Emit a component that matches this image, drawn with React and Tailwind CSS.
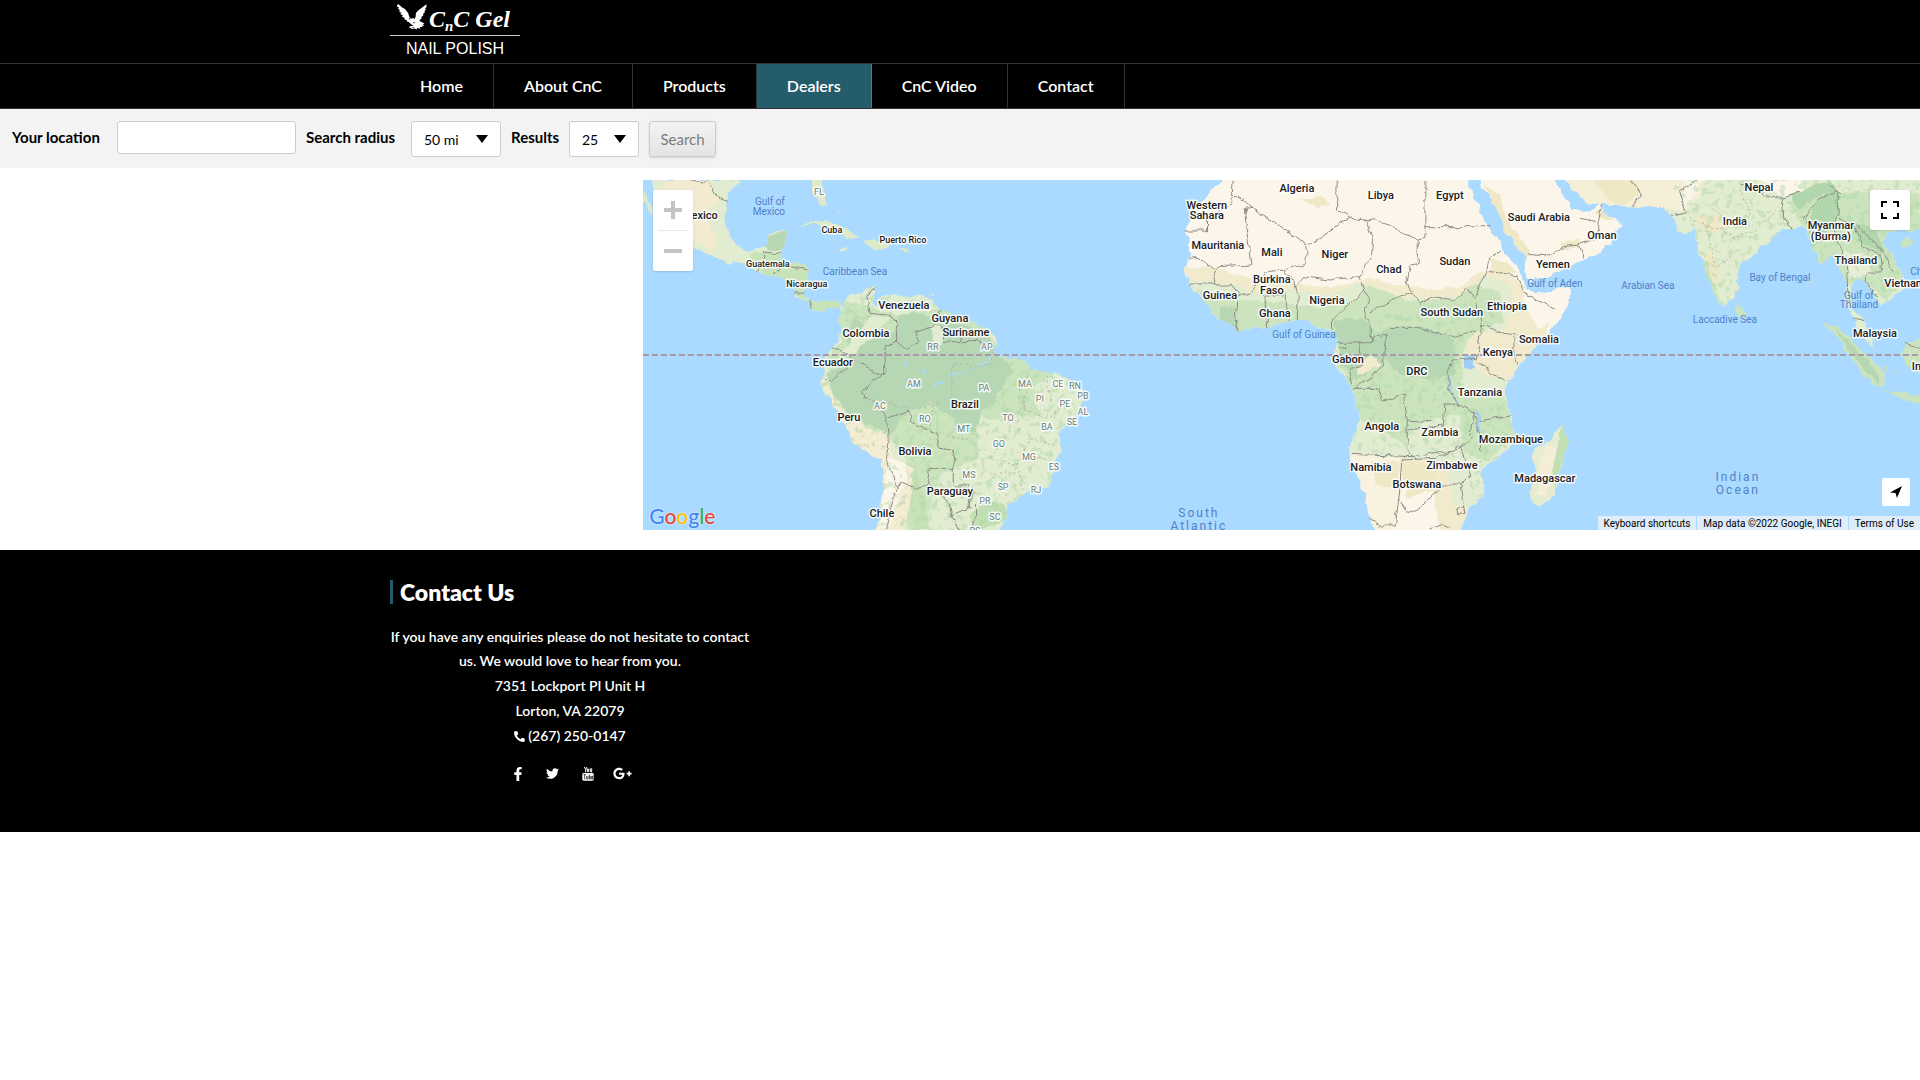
import { FaFacebookF, FaTwitter, FaPhone } from "react-icons/fa";
import { FaGooglePlusG } from "react-icons/fa6";

const navItems = ["Home", "About CnC", "Products", "Dealers", "CnC Video", "Contact"];

// Each label: text, centre x, centre y
const countries = [
  ["Mexico", 57, 35], ["Venezuela", 261, 125], ["Guyana", 307, 138], ["Suriname", 323, 152],
  ["Colombia", 223, 153], ["Ecuador", 190, 182], ["Brazil", 322, 224], ["Peru", 206, 237],
  ["Bolivia", 272, 271], ["Paraguay", 307, 311], ["Chile", 239, 333], ["Algeria", 654, 8],
  ["Libya", 738, 15], ["Western", 564, 25], ["Sahara", 564, 35], ["Mauritania", 575, 65],
  ["Mali", 629, 72], ["Niger", 692, 74], ["Chad", 746, 89], ["Burkina", 629, 99], ["Faso", 629, 110],
  ["Guinea", 577, 115], ["Ghana", 632, 133], ["Nigeria", 684, 120], ["Gabon", 705, 179],
  ["DRC", 774, 191], ["Angola", 739, 246], ["Namibia", 728, 287], ["Botswana", 774, 304],
  ["Egypt", 807, 15], ["Saudi Arabia", 896, 37], ["Oman", 959, 55], ["Sudan", 812, 81],
  ["Yemen", 910, 84], ["Ethiopia", 864, 126], ["South Sudan", 809, 132], ["Somalia", 896, 159],
  ["Kenya", 855, 172], ["Tanzania", 837, 212], ["Zambia", 797, 252], ["Mozambique", 868, 259],
  ["Zimbabwe", 809, 285], ["Madagascar", 902, 298], ["Nepal", 1116, 7], ["India", 1092, 41],
  ["Myanmar", 1188, 45], ["(Burma)", 1188, 56], ["Thailand", 1213, 80], ["Vietnam", 1262, 103],
  ["Malaysia", 1232, 153], ["Indonesia", 1293, 186],
];
const islands = [["Cuba", 189, 49], ["Puerto Rico", 260, 59], ["Guatemala", 125, 83], ["Nicaragua", 164, 103]];
const states = [
  ["FL", 176, 11], ["RR", 290, 166], ["AM", 271, 203], ["AC", 237, 225], ["RO", 282, 238], ["MT", 321, 248],
  ["MS", 326, 294], ["AP", 344, 166], ["PA", 341, 207], ["MA", 382, 203], ["CE", 415, 203], ["RN", 432, 205],
  ["PI", 397, 218], ["PB", 440, 215], ["PE", 422, 223], ["AL", 440, 231], ["SE", 429, 241], ["TO", 365, 237],
  ["BA", 404, 246], ["GO", 356, 263], ["MG", 386, 276], ["ES", 411, 286], ["SP", 360, 306], ["RJ", 393, 309],
  ["PR", 342, 320], ["SC", 352, 336], ["RS", 332, 350],
];
const seas = [
  ["Gulf of", 127, 21], ["Mexico", 126, 31], ["Caribbean Sea", 212, 91], ["Gulf of Guinea", 661, 154],
  ["Gulf of Aden", 912, 103], ["Arabian Sea", 1005, 105], ["Bay of Bengal", 1137, 97],
  ["Gulf of", 1216, 115], ["Thailand", 1216, 124], ["Laccadive Sea", 1082, 139], ["China", 1280, 91],
];
const oceans = [["South", 556, 333], ["Atlantic", 556, 346], ["Indian", 1095, 297], ["Ocean", 1095, 310]];

function Labels({ items, className, halo = true }) {
  return (
    <g className={className} textAnchor="middle" stroke={halo ? "#ffffff" : "none"} strokeWidth="3" strokeLinejoin="round" strokeOpacity="0.85" paintOrder="stroke">
      {items.map(([text, x, y]) => (
        <text key={text + x + y} x={x} y={y + 4}>{text}</text>
      ))}
    </g>
  );
}

const P = {
  mexico: "M35 15L305 15L275 35L262 75L257 110L258 150L272 195L300 215L325 228L370 218L385 200L383 180L395 170L442 165L438 190L430 225L418 240L420 262L470 265L505 280L500 310L498 340L488 352L510 375L545 380L570 377L595 380L608 400L600 415L590 395L555 400L555 413L515 400L500 375L465 362L460 345L430 310L400 305L350 290L320 262L285 262L270 267L215 240L165 220L150 190L110 160L80 100L45 60Z",
  south: "M608 400L600 430L605 470L590 500L580 520L560 535L548 560L550 590L542 615L545 640L570 670L600 720L625 770L632 795L680 830L725 860L730 900L726 950L720 1000L708 1080L1065 1080L1095 1045L1097 1020L1105 990L1150 960L1180 945L1225 930L1245 880L1258 830L1262 770L1300 730L1325 695L1330 665L1325 640L1290 615L1260 595L1230 590L1170 585L1165 570L1150 553L1110 550L1080 545L1060 530L1073 505L1060 475L1030 455L990 440L955 440L915 410L880 385L885 370L850 362L780 362L735 355L718 370L712 395L698 380L705 355L708 333L690 330L665 355L625 365Z",
  africa: "M170 0L165 15L130 40L105 70L80 100L62 130L48 165L57 200L58 240L42 285L55 310L60 330L100 365L112 395L150 430L208 465L245 455L290 458L330 445L370 433L415 430L430 455L485 462L500 490L497 520L485 555L500 580L540 625L558 680L572 725L550 780L537 840L560 900L582 950L595 1010L625 1080L865 1080L895 1010L900 990L940 970L945 930L928 890L960 860L1010 830L1030 800L1028 730L1010 690L1003 640L1030 590L1070 545L1110 500L1150 460L1185 400L1208 350L1205 335L1160 345L1110 355L1085 350L1065 330L1055 300L1040 270L1005 235L990 195L965 180L940 125L910 60L900 35L895 0Z",
  arabia: "M180 0L180 25L210 65L240 110L262 180L300 225L318 250L318 290L330 318L380 305L440 275L490 255L530 240L555 215L575 205L580 185L604 150L590 130L550 120L545 85L510 110L475 105L455 105L440 75L410 30L400 0Z",
  asia: "M425 0L440 20L470 55L500 85L560 88L640 98L730 95L745 115L770 150L770 165L795 178L822 155L830 210L850 270L880 350L910 400L935 370L955 330L955 270L990 245L1060 190L1080 165L1135 155L1150 160L1175 200L1200 265L1240 240L1265 290L1285 330L1270 370L1300 430L1325 490L1362 518L1355 470L1325 430L1300 405L1290 370L1295 330L1310 310L1340 325L1360 355L1380 390L1410 375L1450 340L1448 300L1420 240L1390 210L1400 175L1450 165L1520 160L1520 0Z",
  madagascar: "M425 752L447 800L430 850L405 960L360 992L335 975L330 930L350 890L336 850L345 820L390 795Z",
};

function WorldMap() {
  return (
    <svg viewBox="0 0 1277 350" preserveAspectRatio="xMidYMid slice" className="block h-full w-full" role="img" aria-label="Map of dealers">
      <defs>
        <filter id="coast" x="0" y="0" width="100%" height="100%" colorInterpolationFilters="sRGB">
          <feTurbulence type="fractalNoise" baseFrequency="0.09" numOctaves="3" seed="4" result="n" />
          <feDisplacementMap in="SourceGraphic" in2="n" scale="7" xChannelSelector="R" yChannelSelector="G" />
        </filter>
        <filter id="patches" x="0" y="0" width="100%" height="100%" colorInterpolationFilters="sRGB">
          <feTurbulence type="fractalNoise" baseFrequency="0.05" numOctaves="4" seed="9" result="n" />
          <feColorMatrix in="n" type="matrix" values="0 0 0 0 0.68 0 0 0 0 0.84 0 0 0 0 0.65 9 0 0 0 -5" result="c" />
          <feComposite in="c" in2="SourceGraphic" operator="in" />
        </filter>
        <clipPath id="cSouth"><path d={P.south} /></clipPath>
        <clipPath id="cAfrica"><path d={P.africa} /></clipPath>
        <clipPath id="cAsia"><path d={P.asia} /></clipPath>
        <clipPath id="cMexico"><path d={P.mexico} /></clipPath>
      </defs>
      <rect width="1277" height="350" fill="#aadaff" />
      <g filter="url(#coast)">
        <rect x="-10" y="-10" width="1297" height="370" fill="#aadaff" />
        <g transform="scale(0.33333) translate(-9 -15)">
          {/* North and Central America */}
          <path d={P.mexico} fill="#e1ecd0" />
          <g clipPath="url(#cMexico)">
            <path d="M80 0L200 15L235 70L200 130L235 190L215 225L100 160L60 60Z" fill="#f3ebcf" />
            <path d="M383 180L445 165L430 225L390 230L375 215Z" fill="#b7d8b2" />
            <path d="M330 230L420 235L505 280L500 380L400 310L340 280Z" fill="#c9e3b9" />
            <path d="M500 370L600 380L600 410L520 410Z" fill="#c9e3b9" />
          </g>
          <path d="M9 50L25 75L40 125L30 118L9 80Z M513 0L520 55L545 95L558 88L553 45L545 0Z M480 155L510 137L560 135L610 155L658 188L620 192L610 178L560 158L520 145Z M675 197L700 193L755 212L740 220L705 225L680 210Z M592 222L620 220L618 230L598 230Z M778 219L805 220L804 228L780 227Z M590 98L600 115L594 112Z M846 222L852 224L848 228Z M875 356L885 358L878 363Z" fill="#dfeac8" />

          {/* South America */}
          <path d={P.south} fill="#e1ecd0" />
          <g clipPath="url(#cSouth)">
            <path d="M600 370L700 400L780 420L900 400L1000 430L1080 520L1180 560L1240 590L1180 640L1200 720L1130 720L1080 780L1020 860L900 900L850 1065L800 1065L800 850L740 780L680 760L570 640L560 550L600 500Z" fill="#cbe4bd" />
            <path d="M540 600L580 660L610 720L700 770L745 780L760 850L820 880L820 940L790 1070L690 1070L720 860L620 800Z" fill="#f4ecd3" />
            <path d="M745 850L790 860L810 910L780 960L745 1065L715 1065L730 940Z" fill="#fbf6e9" />
            <path d="M820 870L850 950L870 1065L820 1065L810 940Z" fill="#c5e1b5" />
            <path d="M1010 720L1120 740L1200 790L1230 880L1120 940L1020 1000L940 990L940 880L1020 850Z" fill="#e2ecd0" />
            <path d="M1040 985L1095 980L1100 1040L1000 1065L985 1020Z" fill="#c2dfb3" />
            <path d={P.south} fill="#fff" filter="url(#patches)" opacity="0.45" />
            <path d="M780 420L860 415L880 450L960 445L1050 480L1070 540L1100 560L1120 590L1085 630L1060 690L1020 710L1010 770L960 760L930 720L870 680L800 710L750 780L690 750L640 730L580 660L560 600L640 550L620 480L640 430L690 460L760 470Z" fill="#b7d7b4" />
            <path d="M700 420L745 430L690 490L650 530L590 560L640 490Z M870 450L905 460L910 510L885 500Z" fill="#e2ecd0" />
            <path d="M800 560L803 575M845 575L860 600M880 640L905 620M930 600L985 590M1000 580L1040 560L1060 535" fill="none" stroke="#aadaff" strokeWidth="4" />
          </g>

          {/* Africa */}
          <g transform="translate(1590 0)">
            <path d={P.africa} fill="#fbf6e9" />
            <g clipPath="url(#cAfrica)">
              <path d="M0 280L120 275L230 305L330 325L400 325L490 335L600 310L700 330L800 345L880 330L930 290L1000 280L1060 330L1120 370L1150 400L1120 520L1060 600L1050 840L950 1070L810 1070L790 950L700 930L560 850L480 450L0 450Z" fill="#f2eacd" />
              <path d="M0 325L140 320L260 350L380 345L480 365L570 320L640 370L800 370L890 360L950 300L1020 330L1030 400L1000 460L900 480L880 560L950 600L1040 620L1060 810L930 900L960 1000L850 990L830 870L700 850L540 840L480 460L0 480Z" fill="#e1ecd0" />
              <path d="M1060 340L1210 330L1200 420L1110 460L1070 400Z" fill="#fbf6e9" />
              <path d="M40 330L140 370L300 380L440 395L540 390L600 330L720 380L850 370L910 330L990 350L1000 440L910 470L870 540L880 650L1000 660L1040 780L950 860L880 830L870 720L760 740L700 800L560 730L480 460L200 500Z" fill="#cbe4bd" />
              <path d="M480 470L600 430L880 370L1000 380L980 450L880 500L890 700L1020 680L1030 850L930 990L860 850L560 830Z" fill="#fff" filter="url(#patches)" opacity="0.45" />
              <path d="M490 440L580 430L610 480L650 460L760 455L850 490L855 600L780 610L690 600L650 550L590 590L560 620L510 560Z" fill="#b7d7b4" />
              <path d="M150 400L200 400L210 465L150 430Z M615 480L655 470L640 560L580 590Z" fill="#b7d7b4" />
              <path d="M570 560L610 540L630 570L560 600Z M920 470L1040 480L1030 560L960 560Z" fill="#f2eacd" />
              <path d="M530 840L690 850L700 930L670 1070L600 1070Z" fill="#f8f2df" />
              <path d="M600 860L690 860L680 940L620 930Z M700 860L800 870L790 940L710 970Z M395 75L470 65L480 90L440 95Z M960 250L1010 260L1040 290L970 290Z" fill="#f0e7c5" />
            </g>
            <path d="M880 545L915 540L915 580L885 580Z M838 600L846 650L862 685L856 685L840 650L834 610Z M918 705L930 720L930 775L922 770Z" fill="#9fcdf8" />
          </g>

          {/* Arabia, Asia and Madagascar */}
          <g transform="translate(2340 0)">
            <path d={P.arabia} fill="#fbf6e9" />
            <path d="M190 25L235 60L260 130L300 190L330 235L318 250L262 180L225 90Z M520 115L545 105L590 140L560 135Z M420 205L480 195L475 215L430 225Z" fill="#f0e7c5" />
            <path d={P.asia} fill="#e1ecd0" />
            <g clipPath="url(#cAsia)">
              <path d="M420 0L860 0L840 60L800 110L740 100L500 90Z" fill="#f5efd8" />
              <path d="M520 10L640 10L660 60L600 95L550 60Z M830 130L900 120L930 160L860 180Z M845 230L890 240L900 340L870 300Z" fill="#f0e7c5" />
              <path d="M1000 0L1160 0L1150 50L1090 70Z M800 10L850 10L820 60L780 100Z" fill="#fbf6e9" />
              <path d="M840 250L865 260L885 350L915 395L890 395Z M1100 80L1300 50L1500 60L1500 170L1400 170L1450 300L1400 380L1340 320L1260 330L1180 240L1140 140Z" fill="#cbe4bd" />
              <path d="M1190 80L1250 30L1260 120L1180 220L1160 150Z M1110 60L1230 15L1250 40L1130 100Z M1300 140L1370 160L1390 230L1310 200Z" fill="#b2d6ae" />
              <path d="M1270 230L1340 240L1350 300L1290 310Z" fill="#e8eed6" />
              <path d="M750 0L1520 0L1520 400L1150 300L860 400Z" fill="#fff" filter="url(#patches)" opacity="0.45" />
            </g>
            <path d={P.madagascar} fill="#e6ecd0" />
            <path d="M425 752L447 800L430 850L405 940L400 880L415 800Z" fill="#c2dfb3" />
            <path d="M380 810L410 820L380 960L350 960L360 860Z" fill="#f5eed6" />
          </g>
          <g transform="translate(3090 0)" fill="#cbe4bd">
            <path d="M205 375L230 410L228 430L205 430L197 405Z M463 447L500 455L560 510L610 560L645 600L642 640L600 620L550 560L520 510Z M638 645L700 655L760 660L760 684L700 675Z M760 475L740 490L710 505L695 540L710 570L760 596Z M690 205L715 185L728 200L705 225Z M418 310L424 315L421 330Z M640 570L655 575L650 590Z M670 585L682 588L676 594Z" />
            <path d="M490 460L560 520L630 600L630 630L580 580Z" fill="#b7d7b4" />
          </g>

          {/* National borders */}
          <g fill="none" stroke="#8c8c86" strokeWidth="3">
            <path d="M150 15L185 25L200 17L235 70L268 80M370 230L405 235L420 235M370 230L375 245L350 290M400 300L430 270L500 285M460 350L498 352M510 375L512 400" />
            <path d="M708 335L680 360L690 415L740 420L770 435L770 500L735 515L735 530L738 600L725 600L640 555L580 515M555 615L575 622L640 555M738 600L700 615L668 650L675 670L720 690L722 710L745 730L810 708L812 740L890 775L898 820L935 825L945 850L938 880L870 880L860 925L825 940L790 925L770 935L740 850L745 790L740 730M770 500L800 525L840 500L825 470L850 465L880 455L905 400M905 455L912 500L950 500L1060 500M955 455L960 500M940 880L940 930L980 930L990 1000L930 1025M780 925L760 970L740 1065M860 925L930 985L940 1025L960 1065M990 1065L1010 1020L1010 990M985 1000L1000 935" />
            <g transform="translate(1590 0)">
              <path d="M47 165L113 165L113 135L187 80L187 55L390 193L408 207L435 200L540 127L500 100L502 15M187 55L190 15M540 127L575 138L610 128L745 195L745 265L722 270L712 320L725 350M765 15L765 190L745 195M765 155L965 155M223 100L250 97M223 100L243 270L145 275L130 285L100 250L55 252M60 330L140 330L130 290M408 207L408 268L340 285L290 290L245 350L205 362M380 335L400 305L480 315L565 305L605 245L608 185L592 135M565 305L580 345L485 440L485 460M382 433L385 365L375 330L340 285M290 458L285 360L340 360M355 435L345 350M205 362L200 420L208 465M140 330L180 330L205 362M580 345L600 370L583 405L612 500L500 502M598 412L725 350L750 385L790 365L850 375L890 340L915 370L950 290L960 245L995 228M530 502L530 522L500 522M562 502L580 575L535 580L545 625M612 500L615 485L653 480L635 570L605 610L550 640L620 640L635 680L700 660L712 735L785 740M653 460L740 460L850 485L920 465M935 450L1000 475L1045 480M920 380L935 450L920 550L850 555L835 590L835 640L865 690L825 690L820 750L715 765M865 690L910 710L900 780M712 735L712 825L730 845L540 838M730 845L870 825L910 780M920 555L1005 620M930 740L1025 722M910 710L938 830M1035 485L1035 545L1045 570M960 290L1040 300L1060 350L1155 405M695 860L690 940L677 1050L625 1050L600 1025M685 970L710 1015L760 990L820 930L870 930L885 1015M695 855L800 850L870 815L900 900L870 930M860 1005L880 995L885 1015L865 1020ZM785 1065L820 1050L840 1065" />
            </g>
            <g transform="translate(2340 0)">
              <path d="M318 235L390 240L430 215L475 210L530 190L535 140L480 130M475 210L490 250M535 140L545 90M640 95L665 60L635 15M750 120L800 110L775 50L830 15M960 20L1030 65L1090 70L1140 50M1090 70L1095 130L1110 160M1170 160L1150 130L1200 70L1250 50L1255 120L1240 170L1280 270L1285 380M1230 30L1260 60M1260 130L1310 160L1330 220L1380 235L1385 290L1340 295L1335 320L1375 370M1310 150L1390 230L1420 290M1295 428L1330 440M1455 505L1500 520" />
            </g>
          </g>
          <g fill="none" stroke="#a4aba0" strokeWidth="2" strokeDasharray="8 6">
            <path d="M1060 500L1060 560L1000 580L940 560L930 690L1010 700M880 690L870 760L980 800M1095 680L1110 770L1050 850L1130 870L1165 790L1250 810M1135 770L1140 600M1170 580L1150 700L1220 730L1300 680M1050 900L1140 890L1150 950M1220 600L1230 680M1140 860L1220 850M670 670L820 700L900 680" />
            <path d="M3210 90L3260 140L3340 120M3200 150L3230 280L3280 240M3250 200L3350 160L3420 90M3150 130L3280 180M3300 40L3330 120" />
          </g>
        </g>
      </g>
      <path d="M0 175H1277" stroke="#a89aa6" strokeWidth="2" strokeDasharray="6 3" />
      <Labels items={countries} className="fill-[#202020] text-[11px] font-medium" />
      <Labels items={islands} className="fill-[#202020] text-[9px] font-medium" />
      <Labels items={states} className="fill-[#637f78] text-[9px]" />
      <Labels items={seas} className="fill-[#5080c8] text-[10px]" halo={false} />
      <Labels items={oceans} className="fill-[#5080c8] text-[12px] tracking-[2px]" halo={false} />
    </svg>
  );
}

function Logo() {
  return (
    <a href="#home" className="flex w-[130px] flex-col text-white">
      <span className="flex h-[35px] items-start pl-[7px]">
        <svg viewBox="0 0 92 78" className="mt-1 h-[26px] w-[30px] shrink-0" fill="currentColor" aria-hidden="true">
          <path d="M0 2L5 0L15 9L25 15L34 27L38 39L43 44L50 42L53 46L57 39L58 27L66 18L76 11L86 3L91 1L90 9L86 13L89 15L84 21L86 24L80 30L81 34L75 39L75 44L69 48L70 52L77 55L84 60L79 62L84 66L75 66L80 70L70 70L72 75L62 73L60 77L54 74L45 76L41 72L36 71L40 67L51 66L43 61L37 55L29 52L31 49L22 46L24 42L15 38L18 34L10 30L13 26L6 21L9 18L3 13L6 10L0 7Z" />
          <path d="M35 45L40 42L41 47Z M50 54L56 57L51 59Z M45 71L52 69L50 73Z" fill="#000" />
        </svg>
        <span className="whitespace-nowrap pl-[2px] pt-1 font-['Liberation_Serif',serif] text-[24px] font-bold italic leading-[30px]">
          C<sub className="text-[15px]">n</sub>C Gel
        </span>
      </span>
      <span className="border-t border-[#ccc] pt-[3px] text-center font-['Liberation_Sans',sans-serif] text-[16px] leading-[20px]">NAIL POLISH</span>
    </a>
  );
}

function SelectBox({ id, options, className }) {
  return (
    <span className={"relative block " + className}>
      <select id={id} className="h-9 w-full appearance-none rounded-[3px] border border-[#ccc] bg-white pl-3 text-[14px] text-black">
        {options.map((o) => <option key={o}>{o}</option>)}
      </select>
      <svg viewBox="0 0 12 8" className="pointer-events-none absolute right-[13px] top-[14px] h-2 w-3" aria-hidden="true"><path d="M0 0H12L6 8Z" /></svg>
    </span>
  );
}

function YouTubeMark() {
  return (
    <svg viewBox="0 0 36 42" className="h-[14px] w-3" fill="none" stroke="currentColor" strokeWidth="3" aria-hidden="true">
      <path d="M7 0L11 8V16M15 0L11 8M16 6H20V14H16ZM25 4V14H29V4M29 14V16" />
      <rect x="1" y="18" width="34" height="23" rx="4" fill="currentColor" stroke="none" />
      <path d="M4 23H12M8 23V37M14 27V36H18V27M22 22V36H25V28H22M33 33V36H29V28H33V31H29" stroke="#000" strokeWidth="2" />
    </svg>
  );
}

export default function App() {
  return (
    <div className="min-h-screen bg-white font-[Lato,sans-serif] text-black">
      <header className="bg-black text-white">
        <div className="mx-auto h-[63px] max-w-[1140px]"><Logo /></div>
        <nav className="border-y border-[#333]" aria-label="Main">
          <ul className="mx-auto flex max-w-[1140px]">
            {navItems.map((item) => (
              <li key={item}>
                <a
                  href="#nav"
                  className={"block border-r px-[30px] text-[16px] font-semibold leading-[44px] " + (item === "Dealers" ? "border-[#4b7d8b] bg-[#255c6b]" : "border-[#333]")}
                >
                  {item}
                </a>
              </li>
            ))}
          </ul>
        </nav>
      </header>

      <main>
        <form className="flex h-[59px] items-start bg-[#f3f3f3] px-3 pt-3 text-[14px]" onSubmit={(e) => e.preventDefault()}>
          <label htmlFor="location" className="w-[105px] text-[15px] font-bold leading-8">Your location</label>
          <input id="location" type="text" className="h-[33px] w-[179px] rounded-[3px] border border-[#ccc] bg-white px-3" />
          <label htmlFor="radius" className="ml-[10px] w-[105px] text-[15px] font-bold leading-8">Search radius</label>
          <SelectBox id="radius" options={["50 mi", "10 mi", "25 mi", "100 mi"]} className="w-[90px]" />
          <label htmlFor="results" className="ml-[10px] w-[58px] text-[15px] font-bold leading-8">Results</label>
          <SelectBox id="results" options={["25", "50", "75", "100"]} className="w-[70px]" />
          <button type="submit" className="ml-[10px] h-9 w-[67px] rounded-[3px] border border-[#ccc] bg-gradient-to-b from-[#f3f3f3] to-[#e4e4e4] text-[15px] text-[#7c7c7c] shadow-sm">Search</button>
        </form>

        <section className="flex justify-end pb-5 pt-3" aria-label="Dealer map">
          <div className="relative h-[350px] w-[66.5%] overflow-hidden font-[Roboto,sans-serif]">
            <WorldMap />
            <div className="absolute left-[10px] top-[10px] flex w-10 flex-col items-center rounded-[2px] bg-white shadow">
              <button type="button" aria-label="Zoom in" className="flex h-10 w-10 items-center justify-center">
                <svg viewBox="0 0 18 18" className="size-[18px]" fill="#c4c4c4"><path d="M7 0h4v7h7v4h-7v7H7v-7H0V7h7z" /></svg>
              </button>
              <span className="h-px w-[30px] bg-[#e6e6e6]" />
              <button type="button" aria-label="Zoom out" className="flex h-10 w-10 items-center justify-center">
                <svg viewBox="0 0 18 18" className="size-[18px]" fill="#c4c4c4"><path d="M0 7h18v4H0z" /></svg>
              </button>
            </div>
            <button type="button" aria-label="Toggle fullscreen view" className="absolute right-[10px] top-[10px] flex size-10 items-center justify-center rounded-[2px] bg-white shadow">
              <svg viewBox="0 0 18 18" className="size-[18px]"><path d="M0 0v6h2V2h4V0H0zm16 0h-4v2h4v4h2V0h-2zm0 16h-4v2h6v-6h-2v4zM2 12H0v6h6v-2H2v-4z" /></svg>
            </button>
            <button type="button" aria-label="Use my location" className="absolute bottom-6 right-[10px] flex size-7 items-center justify-center rounded-[2px] bg-white">
              <svg viewBox="0 0 12 12" className="size-3"><path d="M12 0L7 12L5.5 7L0 6.5Z" /></svg>
            </button>
            <a href="#google" className="absolute bottom-0 left-[6px] font-[Lato,sans-serif] text-[21px] font-medium leading-[28px] [text-shadow:0_0_2px_white]">
              <span className="text-[#4285f4]">G</span><span className="text-[#ea4335]">o</span><span className="text-[#fbbc05]">o</span><span className="text-[#4285f4]">g</span><span className="text-[#34a853]">l</span><span className="text-[#ea4335]">e</span>
            </a>
            <div className="absolute bottom-0 right-0 flex h-[14px] gap-px text-[10px] leading-[14px] text-black">
              <button type="button" className="bg-[#f5f5f5]/70 px-[6px] pt-px">Keyboard shortcuts</button>
              <span className="bg-[#f5f5f5]/70 px-[6px] pt-px">Map data ©2022 Google, INEGI</span>
              <a href="#terms" className="bg-[#f5f5f5]/70 px-[6px] pt-px">Terms of Use</a>
            </div>
          </div>
        </section>
      </main>

      <footer className="bg-black pb-[49px] pt-[30px] text-white">
        <div className="mx-auto max-w-[1140px]">
          <div className="w-[360px]">
            <h2 className="border-l-[3px] border-[#255c6b] pl-[7px] text-[23px] font-extrabold leading-[24px]">Contact Us</h2>
            <div className="space-y-px pt-[21px] text-center text-[14px] font-semibold leading-[24px]">
              <p>If you have any enquiries please do not hesitate to contact us. We would love to hear from you.</p>
              <p>7351 Lockport Pl Unit H</p>
              <p>Lorton, VA 22079</p>
              <p className="flex items-center justify-center gap-[3px]"><FaPhone className="size-[11px] -scale-x-100" aria-hidden="true" />(267) 250-0147</p>
            </div>
            <div className="flex items-center justify-center gap-[22px] pt-4">
              <a href="#facebook" aria-label="Facebook" className="flex w-[13px] justify-center"><FaFacebookF className="size-[14px] shrink-0" /></a>
              <a href="#twitter" aria-label="Twitter" className="flex w-[13px] justify-center"><FaTwitter className="size-[13px]" /></a>
              <a href="#youtube" aria-label="YouTube" className="flex w-[13px] justify-center"><YouTubeMark /></a>
              <a href="#plus" aria-label="Google Plus" className="flex w-[13px] justify-center"><FaGooglePlusG className="size-[19px] shrink-0" /></a>
            </div>
          </div>
        </div>
      </footer>
    </div>
  );
}
